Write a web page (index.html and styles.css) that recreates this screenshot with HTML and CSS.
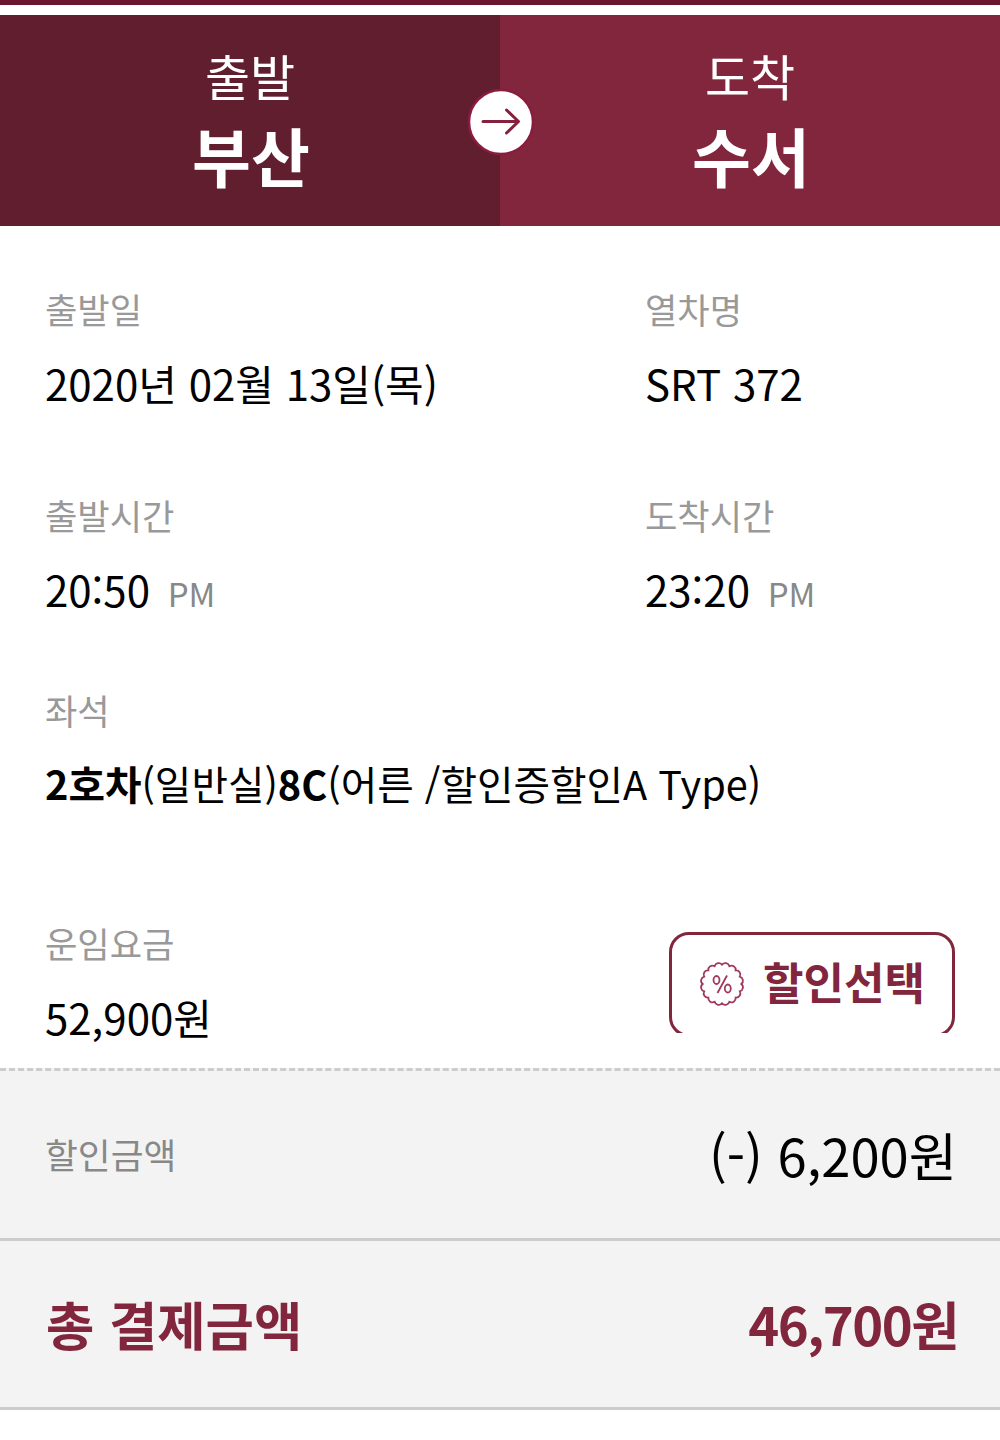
FILE: index.html
```html
<!DOCTYPE html>
<html lang="ko">
<head>
  <meta charset="UTF-8">
  <title>승차권 결제</title>
  <link rel="stylesheet" href="styles.css">
</head>
<body>
  <div class="topbar"></div>
  <div class="route">
    <div class="station from">
      <span class="station-label">출발</span>
      <strong>부산</strong>
    </div>
    <div class="station to">
      <span class="station-label">도착</span>
      <strong>수서</strong>
    </div>
    <div class="arrow">
      <svg width="68" height="68" viewBox="0 0 68 68">
        <circle cx="34" cy="34" r="32" fill="#fff" stroke="#8c1b40" stroke-width="2.500"/>
        <path d="M16 33.500H51M39.500 22L51.500 33.500L39.500 45" fill="none" stroke="#85213f" stroke-width="3" stroke-linecap="round" stroke-linejoin="round"/>
      </svg>
    </div>
  </div>

  <div class="info">
    <div class="row row-date">
      <div class="col">
        <div class="label">출발일</div>
        <div class="value">2020년 02월 13일(목)</div>
      </div>
      <div class="col">
        <div class="label">열차명</div>
        <div class="value">SRT 372</div>
      </div>
    </div>
    <div class="row row-time">
      <div class="col">
        <div class="label">출발시간</div>
        <div class="value">20:50 <span class="pm">PM</span></div>
      </div>
      <div class="col">
        <div class="label">도착시간</div>
        <div class="value">23:20 <span class="pm">PM</span></div>
      </div>
    </div>
    <div class="row row-seat">
      <div class="seat">
        <div class="label">좌석</div>
        <div class="value value-seat"><b>2호차</b>(일반실)<b>8C</b>(어른 /할인증할인A Type)</div>
      </div>
    </div>
    <div class="row row-fare">
      <div class="fare">
        <div class="label">운임요금</div>
        <div class="value">52,900원</div>
      </div>
      <div class="btn-clip">
        <button type="button" class="btn-discount">
          <svg width="46" height="46" viewBox="0 0 46 46" fill="none" stroke="#a03a5c" stroke-width="1.800">
            <path d="M23 3.700A4.200 4.200 0 0 1 30.400 5.200A4.200 4.200 0 0 1 36.650 9.350A4.200 4.200 0 0 1 40.800 15.600A4.200 4.200 0 0 1 42.300 23A4.200 4.200 0 0 1 40.800 30.400A4.200 4.200 0 0 1 36.650 36.650A4.200 4.200 0 0 1 30.400 40.800A4.200 4.200 0 0 1 23 42.300A4.200 4.200 0 0 1 15.600 40.800A4.200 4.200 0 0 1 9.350 36.650A4.200 4.200 0 0 1 5.200 30.400A4.200 4.200 0 0 1 3.700 23A4.200 4.200 0 0 1 5.200 15.600A4.200 4.200 0 0 1 9.350 9.350A4.200 4.200 0 0 1 15.600 5.200A4.200 4.200 0 0 1 23 3.700Z"/>
            <path d="M28 14.500L18.500 32"/>
            <ellipse cx="17.500" cy="19" rx="3" ry="4"/>
            <ellipse cx="28.800" cy="27.500" rx="3" ry="4"/>
          </svg>
          <span>할인선택</span>
        </button>
      </div>
    </div>
  </div>

  <div class="amount discount">
    <span class="amount-label">할인금액</span>
    <span class="amount-value">(-) 6,200원</span>
  </div>
  <div class="amount total">
    <span>총 결제금액</span>
    <span class="total-value">46,700원</span>
  </div>
</body>
</html>
```

FILE: styles.css
```css
* { box-sizing: border-box; }
body { margin: 0; background: #fff; color: #000; font-family: "Noto Sans CJK KR", sans-serif; }
.topbar { height: 5px; background: #6b1530; margin-bottom: 10px; }
.route { position: relative; display: flex; height: 211px; color: #fff; text-align: center; }
.station { flex: 1; padding-top: 27px; }
.from { background: #611e2f; }
.to { background: #81263c; }
.station-label { display: block; font-size: 49px; line-height: 66px; }
.station strong { display: block; padding-left: 2px; font-size: 64px; line-height: 92px; font-weight: 700; }
.arrow { position: absolute; left: 467px; top: 73px; height: 68px; }
.info { height: 842px; padding: 59px 45px 0; }
.row { display: flex; }
.row .col:first-child { width: 600px; }
.row-date { height: 206px; }
.row-time { height: 195px; }
.row-seat { height: 233px; }
.row-fare { justify-content: space-between; }
.label { font-size: 35.200px; line-height: 48px; color: #999; }
.value { font-size: 42px; line-height: 60px; margin-top: 20px; white-space: pre; }
.value-seat { margin-top: 19px; font-size: 39.700px; }
.pm { margin-left: 6px; font-size: 33px; color: #888; }
.btn-clip { height: 101px; margin-top: 13px; overflow: hidden; }
.btn-discount { display: flex; align-items: center; width: 286px; height: 105px; padding: 0 0 2px 27px; gap: 18px; background: #fff; border: 3px solid #81263c; border-radius: 20px; color: #81263c; font: 700 44px/60px "Noto Sans CJK KR", sans-serif; }
.btn-discount span { margin-top: -5px; }
.amount { display: flex; align-items: center; justify-content: space-between; height: 169px; padding: 0 43px 0 45px; background: #f3f3f3; border-bottom: 3px solid #ccc; }
.discount { height: 173px; border-top: 3px dashed #ccc; }
.amount-label { margin-top: -2px; font-size: 35.700px; color: #888; }
.amount-value { margin-top: -1px; font-size: 52.500px; }
.total { padding: 0 42px 2px 46px; color: #81263c; font-size: 52.500px; font-weight: 700; }
.total-value { letter-spacing: -1.500px; }
```
